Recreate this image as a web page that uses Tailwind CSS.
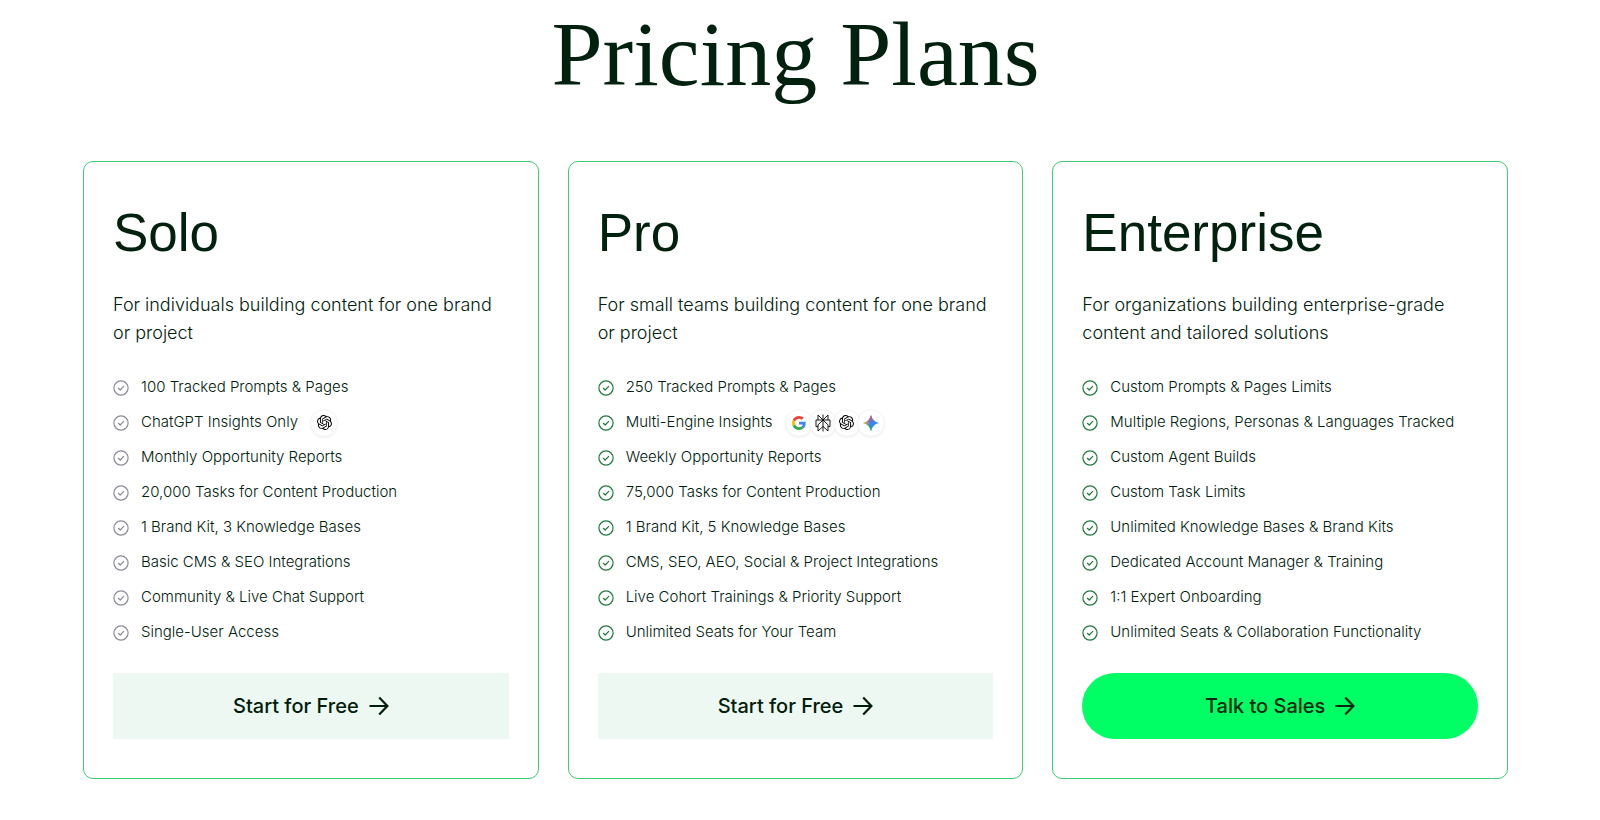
<!DOCTYPE html>
<html lang="en">

<head>
    <meta charset="UTF-8">
    <meta name="viewport" content="width=device-width, initial-scale=1.0">
    <title>Pricing Plans</title>
    <script src="https://cdn.jsdelivr.net/npm/@tailwindcss/browser@4"></script>
</head>

<body class="bg-white text-[#00210d] font-['Inter','Liberation_Sans',sans-serif]">
    <!-- Shared icons -->
    <svg class="absolute size-0" aria-hidden="true">
        <symbol id="check" viewBox="0 0 16 16" fill="none" stroke="currentColor" stroke-linecap="round" stroke-linejoin="round">
            <circle cx="8" cy="8" r="7.1" stroke-width="1.2" />
            <path d="M5.4 8.3l1.8 1.7 3.5-3.6" stroke-width="1.2" />
        </symbol>
        <symbol id="arrow" viewBox="0 0 20 20" fill="none" stroke="currentColor" stroke-width="2.2">
            <path d="M.5 10H18M10.2 1.6L18.4 10l-8.2 8.4" />
        </symbol>
        <symbol id="openai" viewBox="0 0 24 24" fill="currentColor">
            <path d="M22.2819 9.8211a5.9847 5.9847 0 0 0-.5157-4.9108 6.0462 6.0462 0 0 0-6.5098-2.9A6.0651 6.0651 0 0 0 4.9807 4.1818a5.9847 5.9847 0 0 0-3.9977 2.9 6.0462 6.0462 0 0 0 .7427 7.0966 5.98 5.98 0 0 0 .511 4.9107 6.051 6.051 0 0 0 6.5146 2.9001A5.9847 5.9847 0 0 0 13.2599 24a6.0557 6.0557 0 0 0 5.7718-4.2058 5.9894 5.9894 0 0 0 3.9977-2.9001 6.0557 6.0557 0 0 0-.7475-7.0729zm-9.022 12.6081a4.4755 4.4755 0 0 1-2.8764-1.0408l.1419-.0804 4.7783-2.7582a.7948.7948 0 0 0 .3927-.6813v-6.7369l2.02 1.1686a.071.071 0 0 1 .038.052v5.5826a4.504 4.504 0 0 1-4.4945 4.4944zm-9.6607-4.1254a4.4708 4.4708 0 0 1-.5346-3.0137l.142.0852 4.783 2.7582a.7712.7712 0 0 0 .7806 0l5.8428-3.3685v2.3324a.0804.0804 0 0 1-.0332.0615L9.74 19.9502a4.4992 4.4992 0 0 1-6.1408-1.6464zM2.3408 7.8956a4.485 4.485 0 0 1 2.3655-1.9728V11.6a.7664.7664 0 0 0 .3879.6765l5.8144 3.3543-2.0201 1.1685a.0757.0757 0 0 1-.071 0l-4.8303-2.7865A4.504 4.504 0 0 1 2.3408 7.872zm16.5963 3.8558L13.1038 8.364 15.1192 7.2a.0757.0757 0 0 1 .071 0l4.8303 2.7913a4.4944 4.4944 0 0 1-.6765 8.1042v-5.6772a.79.79 0 0 0-.407-.667zm2.0107-3.0231l-.142-.0852-4.7735-2.7818a.7759.7759 0 0 0-.7854 0L9.409 9.2297V6.8974a.0662.0662 0 0 1 .0284-.0615l4.8303-2.7866a4.4992 4.4992 0 0 1 6.6802 4.66zM8.3065 12.863l-2.02-1.1638a.0804.0804 0 0 1-.038-.0567V6.0742a4.4992 4.4992 0 0 1 7.3757-3.4537l-.142.0805L8.704 5.459a.7948.7948 0 0 0-.3927.6813zm1.0976-2.3654l2.602-1.4998 2.6069 1.4998v2.9994l-2.5974 1.4997-2.6067-1.4997Z" />
        </symbol>
        <symbol id="google" viewBox="0 0 48 48">
            <path fill="#EA4335" d="M24 9.5c3.54 0 6.71 1.22 9.21 3.6l6.85-6.85C35.9 2.38 30.47 0 24 0 14.62 0 6.51 5.38 2.56 13.22l7.98 6.19C12.43 13.72 17.74 9.5 24 9.5z" />
            <path fill="#4285F4" d="M46.98 24.55c0-1.57-.15-3.09-.38-4.55H24v9.02h12.94c-.58 2.96-2.26 5.48-4.78 7.18l7.73 6c4.51-4.18 7.09-10.36 7.09-17.65z" />
            <path fill="#FBBC05" d="M10.53 28.59c-.48-1.45-.76-2.99-.76-4.59s.27-3.14.76-4.59l-7.98-6.19C.92 16.46 0 20.12 0 24c0 3.88.92 7.54 2.56 10.78l7.97-6.19z" />
            <path fill="#34A853" d="M24 48c6.48 0 11.93-2.13 15.89-5.81l-7.73-6c-2.15 1.45-4.92 2.3-8.16 2.3-6.26 0-11.57-4.22-13.47-9.91l-7.98 6.19C6.51 42.62 14.62 48 24 48z" />
        </symbol>
        <symbol id="perplexity" viewBox="0 0 16 18" fill="none" stroke="currentColor" stroke-width=".9">
            <path d="M8 .5v17M8 6L3 1v5M8 6l5-5v5M1 6h14v6.6h-2M1 6v6.6h2M8 6l-5 4.8V17l5-4.6M8 6l5 4.8V17l-5-4.6" />
        </symbol>
        <linearGradient id="gem-base" x1="0" y1="8" x2="16" y2="8" gradientUnits="userSpaceOnUse">
            <stop offset="0" stop-color="#f9b81f" />
            <stop offset=".22" stop-color="#d8a24a" />
            <stop offset=".42" stop-color="#3b86f6" />
            <stop offset="1" stop-color="#3b86f6" />
        </linearGradient>
        <linearGradient id="gem-red" x1="7" y1="0" x2="9" y2="7" gradientUnits="userSpaceOnUse">
            <stop offset="0" stop-color="#f04444" />
            <stop offset=".4" stop-color="#f04444" stop-opacity=".7" />
            <stop offset="1" stop-color="#f04444" stop-opacity="0" />
        </linearGradient>
        <linearGradient id="gem-green" x1="7" y1="16" x2="9" y2="9" gradientUnits="userSpaceOnUse">
            <stop offset="0" stop-color="#14b05a" />
            <stop offset=".4" stop-color="#14b05a" stop-opacity=".7" />
            <stop offset="1" stop-color="#14b05a" stop-opacity="0" />
        </linearGradient>
        <symbol id="gemini" viewBox="0 0 16 16">
            <path fill="url(#gem-base)" d="M8 0C9 4.200 11.800 7 16 8C11.800 9 9 11.800 8 16C7 11.800 4.200 9 0 8C4.200 7 7 4.200 8 0z" />
            <path fill="url(#gem-red)" d="M8 0C9 4.200 11.800 7 16 8C11.800 9 9 11.800 8 16C7 11.800 4.200 9 0 8C4.200 7 7 4.200 8 0z" />
            <path fill="url(#gem-green)" d="M8 0C9 4.200 11.800 7 16 8C11.800 9 9 11.800 8 16C7 11.800 4.200 9 0 8C4.200 7 7 4.200 8 0z" />
        </symbol>
    </svg>

    <main class="pt-1 pb-10 pl-[83px] pr-[92px]">
        <h1 class="font-['Liberation_Serif',serif] text-[92px] leading-[100px] text-center">Pricing Plans</h1>

        <div class="mt-[57px] grid grid-cols-3 gap-[29px]">
            <!-- Solo -->
            <section class="border border-[#3fcb74] rounded-[10px] px-[29px] py-[39px]">
                <h2 class="font-['Liberation_Sans',sans-serif] text-[53px] leading-[64px]">Solo</h2>
                <p class="mt-[26px] h-14 text-[18px] leading-[28px] font-light">For individuals building content for one brand or project</p>
                <ul class="mt-[23px] text-[15px] font-light [&>li]:flex [&>li]:items-center [&>li]:h-[35px] [&>li]:gap-3 [&>li>svg]:size-4 [&>li>svg]:text-[#8b8b9b]">
                    <li><svg><use href="#check" /></svg>100 Tracked Prompts &amp; Pages</li>
                    <li><svg><use href="#check" /></svg>ChatGPT Insights Only
                        <span class="size-7 rounded-full border border-gray-100 bg-white shadow-xs flex items-center justify-center text-black"><svg class="size-[15px]"><use href="#openai" /></svg></span>
                    </li>
                    <li><svg><use href="#check" /></svg>Monthly Opportunity Reports</li>
                    <li><svg><use href="#check" /></svg>20,000 Tasks for Content Production</li>
                    <li><svg><use href="#check" /></svg>1 Brand Kit, 3 Knowledge Bases</li>
                    <li><svg><use href="#check" /></svg>Basic CMS &amp; SEO Integrations</li>
                    <li><svg><use href="#check" /></svg>Community &amp; Live Chat Support</li>
                    <li><svg><use href="#check" /></svg>Single-User Access</li>
                </ul>
                <button class="mt-[23px] h-[66px] w-full flex items-center justify-center gap-[10px] bg-[#edf8f2] text-[20px] font-medium text-[#001d0b] cursor-pointer">
                    Start for Free <svg class="size-5"><use href="#arrow" /></svg>
                </button>
            </section>

            <!-- Pro -->
            <section class="border border-[#3fcb74] rounded-[10px] px-[29px] py-[39px]">
                <h2 class="font-['Liberation_Sans',sans-serif] text-[53px] leading-[64px]">Pro</h2>
                <p class="mt-[26px] h-14 text-[18px] leading-[28px] font-light">For small teams building content for one brand or project</p>
                <ul class="mt-[23px] text-[15px] font-light [&>li]:flex [&>li]:items-center [&>li]:h-[35px] [&>li]:gap-3 [&>li>svg]:size-4 [&>li>svg]:text-[#1f7a3d]">
                    <li><svg><use href="#check" /></svg>250 Tracked Prompts &amp; Pages</li>
                    <li><svg><use href="#check" /></svg>Multi-Engine Insights
                        <span class="flex -space-x-1 text-black [&>span]:size-7 [&>span]:rounded-full [&>span]:border [&>span]:border-gray-100 [&>span]:bg-white [&>span]:shadow-xs [&>span]:flex [&>span]:items-center [&>span]:justify-center">
                            <span><svg class="size-[14px]"><use href="#google" /></svg></span>
                            <span><svg class="w-4 h-[18px]"><use href="#perplexity" /></svg></span>
                            <span><svg class="size-[15px]"><use href="#openai" /></svg></span>
                            <span><svg class="size-4"><use href="#gemini" /></svg></span>
                        </span>
                    </li>
                    <li><svg><use href="#check" /></svg>Weekly Opportunity Reports</li>
                    <li><svg><use href="#check" /></svg>75,000 Tasks for Content Production</li>
                    <li><svg><use href="#check" /></svg>1 Brand Kit, 5 Knowledge Bases</li>
                    <li><svg><use href="#check" /></svg>CMS, SEO, AEO, Social &amp; Project Integrations</li>
                    <li><svg><use href="#check" /></svg>Live Cohort Trainings &amp; Priority Support</li>
                    <li><svg><use href="#check" /></svg>Unlimited Seats for Your Team</li>
                </ul>
                <button class="mt-[23px] h-[66px] w-full flex items-center justify-center gap-[10px] bg-[#edf8f2] text-[20px] font-medium text-[#001d0b] cursor-pointer">
                    Start for Free <svg class="size-5"><use href="#arrow" /></svg>
                </button>
            </section>

            <!-- Enterprise -->
            <section class="border border-[#3fcb74] rounded-[10px] px-[29px] py-[39px]">
                <h2 class="font-['Liberation_Sans',sans-serif] text-[53px] leading-[64px]">Enterprise</h2>
                <p class="mt-[26px] h-14 text-[18px] leading-[28px] font-light">For organizations building enterprise-grade content and tailored solutions</p>
                <ul class="mt-[23px] text-[15px] font-light [&>li]:flex [&>li]:items-center [&>li]:h-[35px] [&>li]:gap-3 [&>li>svg]:size-4 [&>li>svg]:text-[#1f7a3d]">
                    <li><svg><use href="#check" /></svg>Custom Prompts &amp; Pages Limits</li>
                    <li><svg><use href="#check" /></svg>Multiple Regions, Personas &amp; Languages Tracked</li>
                    <li><svg><use href="#check" /></svg>Custom Agent Builds</li>
                    <li><svg><use href="#check" /></svg>Custom Task Limits</li>
                    <li><svg><use href="#check" /></svg>Unlimited Knowledge Bases &amp; Brand Kits</li>
                    <li><svg><use href="#check" /></svg>Dedicated Account Manager &amp; Training</li>
                    <li><svg><use href="#check" /></svg>1:1 Expert Onboarding</li>
                    <li><svg><use href="#check" /></svg>Unlimited Seats &amp; Collaboration Functionality</li>
                </ul>
                <button class="mt-[23px] h-[66px] w-full rounded-full flex items-center justify-center gap-[10px] bg-[#00ff64] text-[20px] font-medium text-[#002910] cursor-pointer">
                    Talk to Sales <svg class="size-5"><use href="#arrow" /></svg>
                </button>
            </section>
        </div>
    </main>
</body>

</html>
